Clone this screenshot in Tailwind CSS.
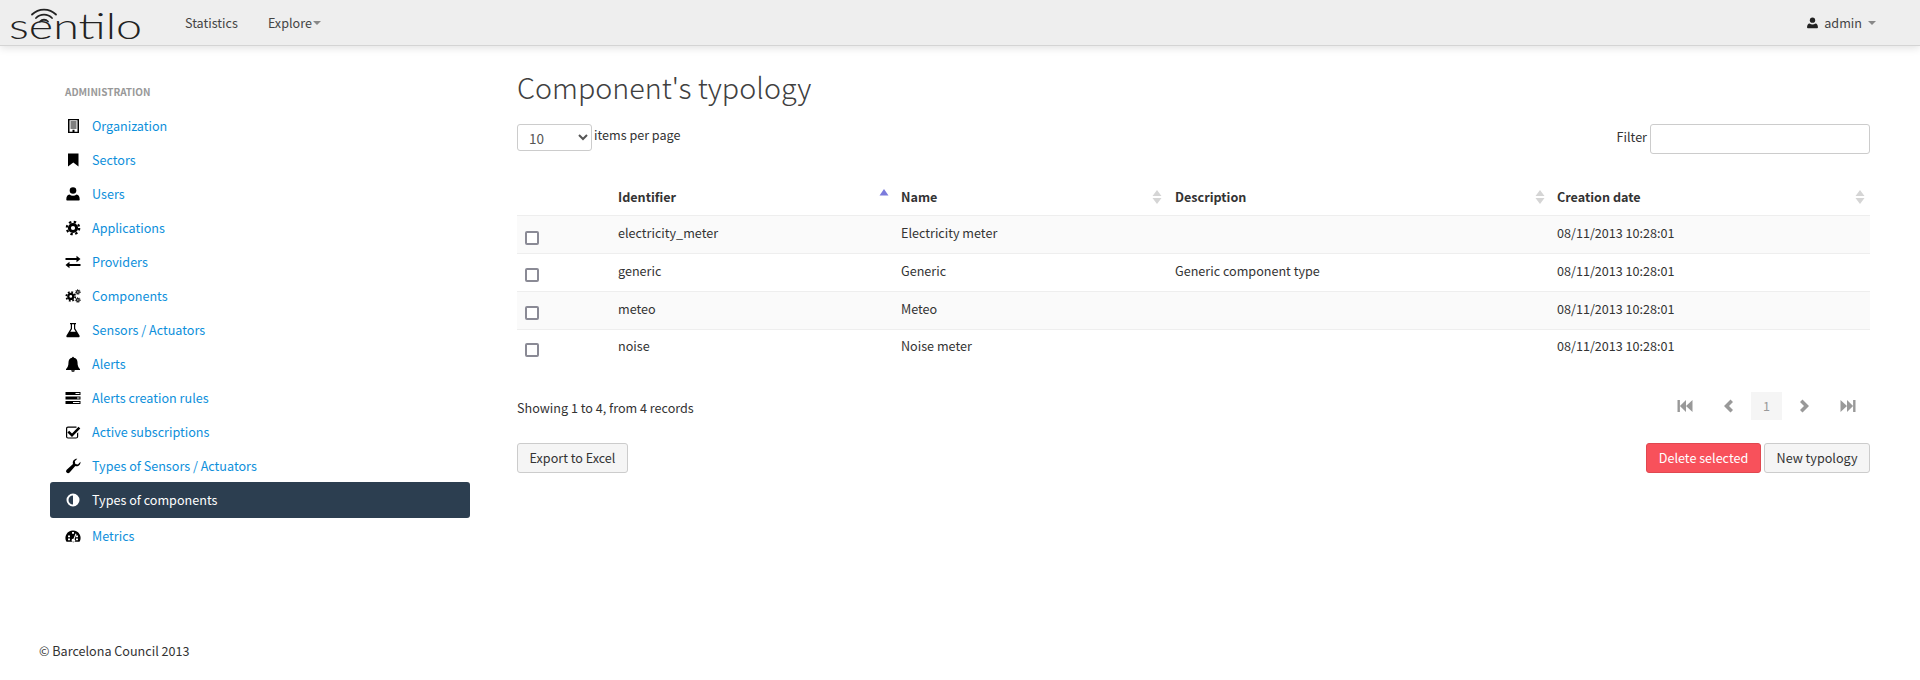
<!DOCTYPE html>
<html lang="en">
<head>
<meta charset="UTF-8">
<title>Sentilo - Component's typology</title>
<script src="https://cdn.jsdelivr.net/npm/@tailwindcss/browser@4"></script>
</head>
<body class="bg-white text-[12.6px] leading-5 text-[#333] font-['Noto_Sans_CJK_SC','Open_Sans',sans-serif] h-[680px] overflow-hidden">
<svg class="hidden">
  <symbol id="i-building" viewBox="0 0 16 16"><path fill-rule="evenodd" d="M3 1h11v14H3zM4.500 2.200v11.600h3v-2h2v2h3V2.200zM5.500 3.500h6v1h-6zM5.500 5.500h6v1h-6zM5.500 7.500h6v1h-6zM5.500 9.500h6v1h-6z"/></symbol>
  <symbol id="i-bookmark" viewBox="0 0 16 16"><path d="M3 1.500h10.500v13l-5.200-4-5.300 4z"/></symbol>
  <symbol id="i-user" viewBox="0 0 16 16"><circle cx="8" cy="4.500" r="3.300"/><path d="M2.300 14.500c-.6 0-1-.4-1-1 0-2.800 1-5 3.200-5 .9.800 2.100 1.200 3.500 1.200s2.600-.4 3.500-1.200c2.200 0 3.200 2.200 3.200 5 0 .6-.4 1-1 1z"/></symbol>
  <symbol id="i-cog" viewBox="0 0 16 16"><circle cx="8" cy="8" r="3.600" fill="none" stroke="currentColor" stroke-width="3"/><circle cx="8" cy="8" r="6.200" fill="none" stroke="currentColor" stroke-width="2.200" stroke-dasharray="2.400 2.470"/></symbol>
  <symbol id="i-exchange" viewBox="0 0 16 16"><path d="M.5 4h11V1.800L15.500 5l-4 3.200V6H.5zM15.500 10h-11V7.800L.5 11l4 3.200V12h11z"/></symbol>
  <symbol id="i-cogs" viewBox="0 0 18 16"><circle cx="6.500" cy="8.500" r="2.800" fill="none" stroke="currentColor" stroke-width="2.500"/><circle cx="6.500" cy="8.500" r="5" fill="none" stroke="currentColor" stroke-width="2" stroke-dasharray="2 1.930"/><circle cx="14.500" cy="3.500" r="1.500" fill="none" stroke="currentColor" stroke-width="1.300"/><circle cx="14.500" cy="3.500" r="2.700" fill="none" stroke="currentColor" stroke-width="1" stroke-dasharray="1.100 1.020"/><circle cx="14.500" cy="12.500" r="1.500" fill="none" stroke="currentColor" stroke-width="1.300"/><circle cx="14.500" cy="12.500" r="2.700" fill="none" stroke="currentColor" stroke-width="1" stroke-dasharray="1.100 1.020"/></symbol>
  <symbol id="i-flask" viewBox="0 0 16 16"><path fill-rule="evenodd" d="M5 1h6v1.200h-.8v4.300L14.500 13.500c.5 1-.1 1.800-1 1.800h-11c-.9 0-1.500-.8-1-1.800L5.800 6.500V2.200H5zM7 2.200v4.700L5.300 9.800h5.400L9 6.900V2.200z"/></symbol>
  <symbol id="i-bell" viewBox="0 0 16 16"><path d="M8 .8c.5 0 .9.400.9.900 2.400.4 3.600 2.300 3.600 4.500 0 3.800 1 5.300 2.500 6.800v.9H1v-.9c1.500-1.500 2.500-3 2.500-6.800 0-2.200 1.200-4.100 3.600-4.500 0-.5.400-.9.900-.9zM6.200 14.200h3.600c0 1-.8 1.600-1.800 1.600s-1.800-.6-1.800-1.600z"/></symbol>
  <symbol id="i-tasks" viewBox="0 0 16 16"><path fill-rule="evenodd" d="M.5 2h15v3h-15zM10.500 3v1h4V3zM.5 6.500h15v3h-15zM12 7.500v1h2.500v-1zM.5 11h15v3h-15zM8 12v1h6.500v-1z"/></symbol>
  <symbol id="i-check" viewBox="0 0 16 16"><path d="M3 2.500h8.500v1.200H3.200c-.6 0-1 .4-1 1v7.800c0 .6.400 1 1 1H11c.6 0 1-.4 1-1V9.500l1.200-1.200v4.200c0 1.200-1 2-2.200 2H3c-1.200 0-2-.8-2-2V4.500c0-1.200.8-2 2-2z"/><path d="M4.200 6.800 7 9.500 13.500 2.800 15.300 4.600 7 13 2.400 8.600z"/></symbol>
  <symbol id="i-wrench" viewBox="0 0 16 16"><path d="M15.500 3.800c.3 2.800-2.300 5.200-5.200 4.300L4.600 14.500c-.8.900-2.100.9-2.900.1-.9-.8-.8-2.100 0-2.900L8 5.900C7.100 3 9.500.4 12.300.7L9.800 3.300l.5 2.600 2.600.5z"/></symbol>
  <symbol id="i-adjust" viewBox="0 0 16 16"><path fill-rule="evenodd" d="M8 1.500a6.500 6.500 0 1 0 0 13 6.500 6.500 0 0 0 0-13zM8 3.500v9a4.500 4.500 0 0 1 0-9z"/></symbol>
  <symbol id="i-gauge" viewBox="0 0 16 16"><path fill-rule="evenodd" d="M8 2.500a7.500 7.500 0 0 0-6.500 11.300h13A7.500 7.500 0 0 0 8 2.500zM7 4h2v1.800H7zM3 7.500h2v1.800H3zM11 7.500h2v1.800h-2zM3 10.500h2v1.800H3zM11 10.500h2v1.800h-2zM10.500 5.500l1 .5-2 5.200a1.700 1.700 0 1 1-1-.4z"/></symbol>
  <symbol id="i-first" viewBox="0 0 16 16"><path d="M.5 2h2.400v12H.5zM2.900 8 9 2v12zM9 8l6.500-6v12z"/></symbol>
  <symbol id="i-last" viewBox="0 0 16 16"><path d="M15.500 2h-2.400v12h2.400zM13.100 8 7 2v12zM7 8 .5 2v12z"/></symbol>
  <symbol id="i-prev" viewBox="0 0 16 16"><path d="M10.500 1.500 13 4 9 8l4 4-2.500 2.500L4 8z"/></symbol>
  <symbol id="i-next" viewBox="0 0 16 16"><path d="M5.500 1.500 3 4l4 4-4 4 2.500 2.500L12 8z"/></symbol>
  <symbol id="i-sort" viewBox="0 0 10 14"><path d="M5 0l4.500 6H.5zM5 14 .5 8h9z"/></symbol>
</svg>

<header class="h-[46px] bg-[#eeeeee] border-b border-[#d4d4d4] shadow-[0_2px_8px_rgba(0,0,0,0.12)] flex items-center pl-[9px] pr-[44px]">
  <svg width="134" height="42" viewBox="0 0 134 42" class="shrink-0 overflow-visible" aria-label="sentilo">
    <g fill="none" stroke="#222" stroke-width="1.800" stroke-linecap="round">
      <path d="M23 12.500a17 17 0 0 1 24 0"/>
      <path d="M27 16a11 11 0 0 1 16 0"/>
      <path d="M31 19.500a5.500 5.500 0 0 1 8 0"/>
    </g>
    <text x="0" y="37" textLength="133" lengthAdjust="spacingAndGlyphs" font-family="Lato" font-weight="300" font-size="36" fill="#222">sentilo</text>
  </svg>
  <nav class="flex items-center ml-[42px] gap-[30px] text-[#444]">
    <a href="#">Statistics</a>
    <a href="#" class="flex items-center gap-px">Explore<span class="border-x-[4px] border-t-[4px] border-x-transparent border-t-[#888]"></span></a>
  </nav>
  <a href="#" class="ml-auto flex items-center text-[#444]">
    <svg width="13" height="14" class="mr-[5px] text-[#222]" fill="currentColor"><use href="#i-user"/></svg>admin<span class="ml-[6px] border-x-[4px] border-t-[4px] border-x-transparent border-t-[#888]"></span>
  </a>
</header>

<div class="flex">
  <aside class="w-[420px] ml-[50px] shrink-0 pt-[38px]">
    <div class="pl-[15px] text-[10px] font-bold leading-4 uppercase text-[#999] mb-[9px]">Administration</div>
    <ul class="text-[#0d8fdb]">
      <li><a href="#" class="h-[34px] flex items-center pl-[15px]"><svg width="16" height="16" class="mr-[11px] text-black" fill="currentColor"><use href="#i-building"/></svg>Organization</a></li>
      <li><a href="#" class="h-[34px] flex items-center pl-[15px]"><svg width="16" height="16" class="mr-[11px] text-black" fill="currentColor"><use href="#i-bookmark"/></svg>Sectors</a></li>
      <li><a href="#" class="h-[34px] flex items-center pl-[15px]"><svg width="16" height="16" class="mr-[11px] text-black" fill="currentColor"><use href="#i-user"/></svg>Users</a></li>
      <li><a href="#" class="h-[34px] flex items-center pl-[15px]"><svg width="16" height="16" class="mr-[11px] text-black" fill="currentColor"><use href="#i-cog"/></svg>Applications</a></li>
      <li><a href="#" class="h-[34px] flex items-center pl-[15px]"><svg width="16" height="16" class="mr-[11px] text-black" fill="currentColor"><use href="#i-exchange"/></svg>Providers</a></li>
      <li><a href="#" class="h-[34px] flex items-center pl-[15px]"><svg width="16" height="16" class="mr-[11px] text-black" fill="currentColor"><use href="#i-cogs"/></svg>Components</a></li>
      <li><a href="#" class="h-[34px] flex items-center pl-[15px]"><svg width="16" height="16" class="mr-[11px] text-black" fill="currentColor"><use href="#i-flask"/></svg>Sensors / Actuators</a></li>
      <li><a href="#" class="h-[34px] flex items-center pl-[15px]"><svg width="16" height="16" class="mr-[11px] text-black" fill="currentColor"><use href="#i-bell"/></svg>Alerts</a></li>
      <li><a href="#" class="h-[34px] flex items-center pl-[15px]"><svg width="16" height="16" class="mr-[11px] text-black" fill="currentColor"><use href="#i-tasks"/></svg>Alerts creation rules</a></li>
      <li><a href="#" class="h-[34px] flex items-center pl-[15px]"><svg width="16" height="16" class="mr-[11px] text-black" fill="currentColor"><use href="#i-check"/></svg>Active subscriptions</a></li>
      <li><a href="#" class="h-[34px] flex items-center pl-[15px]"><svg width="16" height="16" class="mr-[11px] text-black" fill="currentColor"><use href="#i-wrench"/></svg>Types of Sensors / Actuators</a></li>
      <li><a href="#" class="h-[36px] -mt-[1px] mb-[1px] flex items-center pl-[15px] bg-[#2c3e50] text-white rounded-[3px]"><svg width="16" height="16" class="mr-[11px] text-white" fill="currentColor"><use href="#i-adjust"/></svg>Types of components</a></li>
      <li><a href="#" class="h-[34px] flex items-center pl-[15px]"><svg width="16" height="16" class="mr-[11px] text-black" fill="currentColor"><use href="#i-gauge"/></svg>Metrics</a></li>
    </ul>
  </aside>

  <main class="ml-[47px] w-[1353px] pt-[22px]">
    <h1 class="text-[28.700px] leading-[38px] font-light text-[#404040]">Component's typology</h1>
    <div class="mt-[18px] flex justify-between items-start">
      <div class="flex items-start">
        <select class="w-[75px] h-[27px] pl-[7px] text-[13.500px] border border-[#ccc] rounded-[3px] bg-white text-[#555]"><option>10</option></select>
        <span class="ml-[2px] leading-[22px]">items per page</span>
      </div>
      <label class="flex items-start leading-[26px]">Filter<input type="text" class="ml-[3px] w-[220px] h-[30px] border border-[#ccc] rounded-[3px] bg-white"></label>
    </div>
    <table class="mt-[15px] w-full border-collapse table-fixed">
      <thead>
        <tr class="h-[46px] text-left border-b border-[#eee]">
          <th class="w-[101px]"></th>
          <th class="w-[283px] pt-[10px] relative font-bold">Identifier<svg width="10" height="7" viewBox="0 0 10 7" class="absolute right-[12px] top-[20px]" fill="#7b7bdc"><path d="M5 0l4.500 6.500H.5z"/></svg></th>
          <th class="w-[274px] pt-[10px] relative font-bold">Name<svg width="10" height="14" class="absolute right-[13px] top-[21px]" fill="#d5d5d5"><use href="#i-sort"/></svg></th>
          <th class="w-[382px] pt-[10px] relative font-bold">Description<svg width="10" height="14" class="absolute right-[12px] top-[21px]" fill="#d5d5d5"><use href="#i-sort"/></svg></th>
          <th class="pt-[10px] relative font-bold">Creation date<svg width="10" height="14" class="absolute right-[5px] top-[21px]" fill="#d5d5d5"><use href="#i-sort"/></svg></th>
        </tr>
      </thead>
      <tbody>
        <tr class="h-[38px] bg-[#fafafa] border-b border-[#eee] [&>td]:pb-[3px]">
          <td class="pl-[8px]"><input type="checkbox" class="block w-[14px] h-[14px] mt-[10px] appearance-none border-2 border-[#8a8a95] rounded-[2px] bg-white"></td>
          <td>electricity_meter</td><td>Electricity meter</td><td></td><td>08/11/2013 10:28:01</td>
        </tr>
        <tr class="h-[38px] border-b border-[#eee] [&>td]:pb-[3px]">
          <td class="pl-[8px]"><input type="checkbox" class="block w-[14px] h-[14px] mt-[8px] appearance-none border-2 border-[#8a8a95] rounded-[2px] bg-white"></td>
          <td>generic</td><td>Generic</td><td>Generic component type</td><td>08/11/2013 10:28:01</td>
        </tr>
        <tr class="h-[38px] bg-[#fafafa] border-b border-[#eee] [&>td]:pb-[3px]">
          <td class="pl-[8px]"><input type="checkbox" class="block w-[14px] h-[14px] mt-[8px] appearance-none border-2 border-[#8a8a95] rounded-[2px] bg-white"></td>
          <td>meteo</td><td>Meteo</td><td></td><td>08/11/2013 10:28:01</td>
        </tr>
        <tr class="h-[37px] [&>td]:pb-[3px]">
          <td class="pl-[8px]"><input type="checkbox" class="block w-[14px] h-[14px] mt-[8px] appearance-none border-2 border-[#8a8a95] rounded-[2px] bg-white"></td>
          <td>noise</td><td>Noise meter</td><td></td><td>08/11/2013 10:28:01</td>
        </tr>
      </tbody>
    </table>
    <div class="mt-[26px] h-[28px] flex justify-between items-center">
      <span class="pt-[3px]">Showing 1 to 4, from 4 records</span>
      <div class="flex items-center text-[#999] pr-[14px]">
        <svg width="16" height="16" fill="currentColor" class="mr-[27px]"><use href="#i-first"/></svg>
        <svg width="16" height="16" fill="currentColor" class="mr-[15px]"><use href="#i-prev"/></svg>
        <span class="w-[31px] h-[28px] bg-[#f5f5f5] flex items-center justify-center text-[#999]">1</span>
        <svg width="16" height="16" fill="currentColor" class="ml-[15px]"><use href="#i-next"/></svg>
        <svg width="16" height="16" fill="currentColor" class="ml-[27px]"><use href="#i-last"/></svg>
      </div>
    </div>
    <div class="mt-[23px] flex justify-between">
      <button class="h-[30px] w-[111px] border border-[#ccc] rounded-[3px] bg-[#f5f5f5]">Export to Excel</button>
      <div class="flex gap-[3px]">
        <button class="h-[30px] w-[115px] border border-[#e04850] rounded-[3px] bg-[#f8515b] text-white">Delete selected</button>
        <button class="h-[30px] w-[106px] border border-[#ccc] rounded-[3px] bg-[#f5f5f5]">New typology</button>
      </div>
    </div>
  </main>
</div>
<footer class="absolute top-[641px] left-[39px]">© Barcelona Council 2013</footer>
</body>
</html>
